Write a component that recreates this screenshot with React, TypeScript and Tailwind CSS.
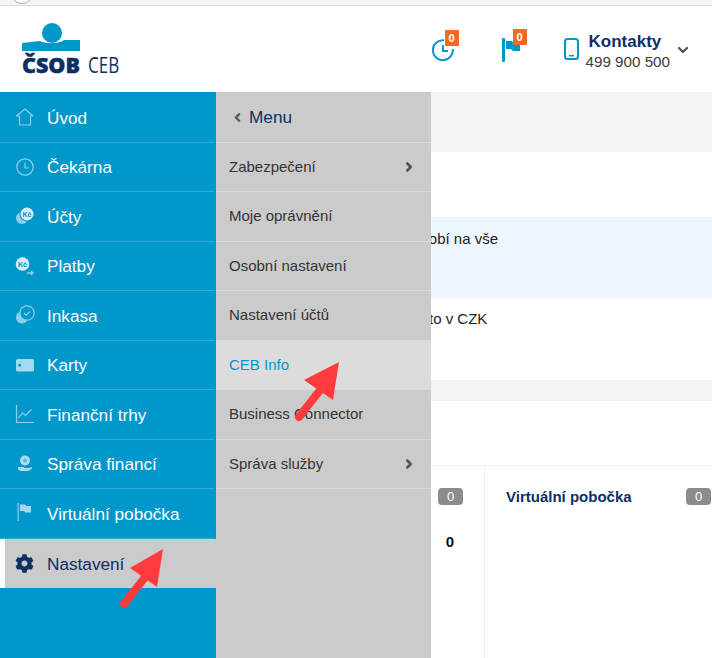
import { ChevronDown, ChevronLeft, ChevronRight } from "lucide-react";
import { FaCog } from "react-icons/fa";
import type { ReactNode } from "react";

// sidebar glyphs, drawn on a 20x20 box in the pale icon blue
const pale = "#8fd0e9";
const blue = "#0097cb";

function HomeIcon() {
  return (
    <svg width="20" height="20" viewBox="0 0 20 20" fill="none" stroke={pale} strokeWidth="1.2">
      <path d="M1.5 9 10 2l8 7h-2.5v9h-11V9z" strokeLinejoin="round" />
    </svg>
  );
}

function ClockIcon() {
  return (
    <svg width="20" height="20" viewBox="0 0 20 20" fill="none" stroke={pale} strokeWidth="1.2">
      <circle cx="10" cy="10" r="8.2" />
      <path d="M10 5.5V11h4" />
    </svg>
  );
}

function CoinsIcon() {
  return (
    <svg width="20" height="20" viewBox="0 0 20 20">
      <circle cx="7" cy="12" r="6" fill={pale} />
      <circle cx="12" cy="8" r="7.6" fill={blue} />
      <circle cx="12" cy="8" r="6.5" fill="#d4edf7" />
      <text x="12" y="10.5" fontSize="7" fontWeight="700" textAnchor="middle" fill={blue} fontFamily="Liberation Sans, sans-serif">
        Kč
      </text>
    </svg>
  );
}

function PayIcon() {
  return (
    <svg width="20" height="20" viewBox="0 0 20 20">
      <circle cx="7.5" cy="8" r="6.8" fill="#d4edf7" />
      <text x="7.5" y="10.5" fontSize="7" fontWeight="700" textAnchor="middle" fill={blue} fontFamily="Liberation Sans, sans-serif">
        Kč
      </text>
      <path d="M12 17h6m-2-2 2 2-2 2" stroke={pale} strokeWidth="1.3" fill="none" />
    </svg>
  );
}

function CollectIcon() {
  return (
    <svg width="20" height="20" viewBox="0 0 20 20" fill="none">
      <circle cx="7" cy="12.5" r="6" fill={pale} />
      <circle cx="12" cy="8" r="7.2" fill={blue} stroke={pale} strokeWidth="1.2" />
      <path d="m9 8 2.2 2.2L15 6.5" stroke={pale} strokeWidth="1.2" />
    </svg>
  );
}

function CardIcon() {
  return (
    <svg width="20" height="20" viewBox="0 0 20 20">
      <rect x="1" y="4" width="18" height="12.5" rx="1.5" fill="#a3d9ee" />
      <rect x="3.5" y="9" width="2.5" height="2.5" fill={blue} />
    </svg>
  );
}

function ChartIcon() {
  return (
    <svg width="20" height="20" viewBox="0 0 20 20" fill="none" stroke={pale} strokeWidth="1.2">
      <path d="M1.5 1v17.5h17.5" />
      <path d="m3.5 14 4-5 3 2.5 6-6" />
    </svg>
  );
}

function HandIcon() {
  return (
    <svg width="20" height="20" viewBox="0 0 20 20">
      <circle cx="10" cy="6.5" r="5" fill="#a9dcef" />
      <circle cx="10" cy="6.5" r="2" fill="#5db9dc" />
      <path d="M3 13h5l2 1h4l3-1v1.5l-3.5 2.5H6l-3-1.5z" fill="#a9dcef" />
    </svg>
  );
}

function FlagIcon() {
  return (
    <svg width="20" height="20" viewBox="0 0 20 20">
      <rect x="2.5" y="0" width="1.2" height="18" fill={pale} />
      <path d="M5 1.5h5l1.5 1.5H16v6.5h-5.5L9 8H5z" fill="#a3d9ee" />
    </svg>
  );
}

const MAIN_ITEMS: { label: string; icon: ReactNode }[] = [
  { label: "Úvod", icon: <HomeIcon /> },
  { label: "Čekárna", icon: <ClockIcon /> },
  { label: "Účty", icon: <CoinsIcon /> },
  { label: "Platby", icon: <PayIcon /> },
  { label: "Inkasa", icon: <CollectIcon /> },
  { label: "Karty", icon: <CardIcon /> },
  { label: "Finanční trhy", icon: <ChartIcon /> },
  { label: "Správa financí", icon: <HandIcon /> },
  { label: "Virtuální pobočka", icon: <FlagIcon /> },
];

const SUB_ITEMS = [
  { label: "Zabezpečení", more: true },
  { label: "Moje oprávnění" },
  { label: "Osobní nastavení" },
  { label: "Nastavení účtů" },
  { label: "CEB Info", active: true },
  { label: "Business Connector" },
  { label: "Správa služby", more: true },
];

function Logo() {
  return (
    <div className="flex w-[98px] flex-col">
      <svg width="58" height="32" viewBox="0 0 58 32" className="block">
        <circle cx="30" cy="10" r="10" fill={blue} />
        <path d="M0 20 18 18c5 3 19 3 24-1h16v11H0z" fill={blue} />
      </svg>
      <div className="mt-[1px] flex items-baseline gap-[8px] font-['Open_Sans','Liberation_Sans',sans-serif] leading-[17px] text-[#0c2f66]">
        <span className="text-[21.5px] font-extrabold [-webkit-text-stroke:0.5px_#0c2f66]">ČSOB</span>
        <span className="inline-block origin-bottom scale-y-125 text-[17px]">CEB</span>
      </div>
    </div>
  );
}

function Badge() {
  return (
    <span className="absolute -top-[9px] -right-[5px] flex h-[16px] w-[14px] items-center justify-center rounded-[1px] bg-[#f26a21] text-[11px] font-bold text-white">
      0
    </span>
  );
}

function Header() {
  return (
    <header className="flex h-[86px] items-center justify-between bg-white pl-[22px] pr-[21px]">
      <Logo />
      <div className="flex items-center">
        <div className="relative mr-[48px] mt-[2px]">
          <svg width="22" height="22" viewBox="0 0 22 22" fill="none" stroke={blue} strokeWidth="2" className="block">
            <path d="M12 1.2A10 10 0 1 0 20.8 10" />
            <path d="M11 6v6h5" />
          </svg>
          <Badge />
        </div>
        <div className="relative mr-[42px] mt-[2px]">
          <svg width="20" height="24" viewBox="0 0 20 24" className="block">
            <rect x="0" y="0" width="3" height="24" rx="1" fill={blue} />
            <path d="M4 3h6l2 3h6v7h-7l-2-2H4z" fill={blue} />
          </svg>
          <Badge />
        </div>
        <svg width="15" height="22" viewBox="0 0 15 22" fill="none" className="mr-[7px] block">
          <rect x="1" y="1" width="13" height="20" rx="2.5" stroke={blue} strokeWidth="2" />
          <rect x="5" y="17" width="5" height="1.5" fill={blue} />
        </svg>
        <div className="mt-[6px] font-['Liberation_Sans',sans-serif]">
          <div className="pl-[3px] text-[17px] leading-[20px] font-bold text-[#0c2f66]">Kontakty</div>
          <div className="text-[15.2px] leading-[20px] text-[#3c3c3c]">499 900 500</div>
        </div>
        <ChevronDown size={16} strokeWidth={3.5} className="ml-[5px] mt-[2px] text-[#555]" />
      </div>
    </header>
  );
}

function Sidebar() {
  return (
    <nav className="relative z-10 w-[215px] shrink-0 bg-[#0097cb] pt-[1px] text-[17.2px]">
      {MAIN_ITEMS.map((item) => (
        <div key={item.label} className="flex h-[49.5px] items-center gap-[12px] border-b border-white/20 pl-[15px] text-white">
          {item.icon}
          <span className="pt-[3px]">{item.label}</span>
        </div>
      ))}
      <div className="flex h-[49.5px] w-[216px] items-center gap-[13px] border-l-[5px] border-white bg-[#cbcbcb] pl-[10px] text-[#0c2f66]">
        <FaCog size={19} />
        <span className="pt-[3px]">Nastavení</span>
      </div>
    </nav>
  );
}

function Flyout() {
  return (
    <div className="absolute inset-y-0 left-0 w-[216px] border-l border-[#0097cb] bg-[#cbcbcb] pt-[1px] text-[15px] text-[#333]">
      <div className="flex h-[49.5px] items-center gap-[5px] border-b border-white/30 pl-[15px] text-[17.2px] text-[#0c2f66]">
        <ChevronLeft size={13} strokeWidth={4.5} className="text-[#555]" />
        <span className="pt-[2px]">Menu</span>
      </div>
      {SUB_ITEMS.map((item) =>
        item.active ? (
          <div key={item.label} className="flex h-[49.5px] items-center bg-[#dcdcdc] pl-[13px] text-[#0097cb]">
            {item.label}
          </div>
        ) : (
          <div key={item.label} className="flex h-[49.5px] items-center justify-between border-b border-white/30 pl-[13px] pr-[15px]">
            {item.label}
            {item.more && <ChevronRight size={14} strokeWidth={4.5} className="text-[#555]" />}
          </div>
        ),
      )}
    </div>
  );
}

function Counter() {
  return (
    <span className="flex h-[17px] w-[25px] items-center justify-center rounded-[4px] bg-[#8c8c8c] text-[13px] text-white">
      0
    </span>
  );
}

function Content() {
  return (
    <main className="relative flex min-w-0 flex-1 flex-col text-[15px] text-[#222]">
      <div className="h-[60px] bg-[#f3f3f3]" />
      <div className="h-[65px] bg-white" />
      <div className="h-[81px] bg-[#edf6fd] pl-[198px] pt-[11px]">osobí na vše</div>
      <div className="h-[82px] bg-white pl-[214px] pt-[10px]">to v CZK</div>
      <div className="h-[21px] bg-[#f3f3f3]" />
      <div className="h-[65px] border-b border-[#f0f0f0] bg-white" />
      <div className="flex flex-1 bg-white">
        <div className="flex w-[270px] shrink-0 flex-col items-end border-r border-[#f0f0f0] pr-[21px] pt-[22px]">
          <Counter />
          <b className="mt-[26px] mr-[9px] text-[#111]">0</b>
        </div>
        <div className="flex flex-1 items-start justify-between pl-[21px] pr-[1px] pt-[22px]">
          <b className="text-[15px] leading-[17px] text-[#0c2f66]">Virtuální pobočka</b>
          <Counter />
        </div>
      </div>
      <Flyout />
    </main>
  );
}

export default function App() {
  return (
    <div className="relative flex h-[658px] w-[712px] flex-col overflow-hidden bg-white font-['Liberation_Sans',sans-serif]">
      <div className="h-[6px] shrink-0 overflow-hidden border-b border-[#dedede] bg-[#f6f6f6] pl-[10px]">
        <div className="-mt-[20px] h-[24px] w-[24px] rounded-full border border-[#aaa] bg-white" />
      </div>
      <Header />
      <div className="flex flex-1">
        <Sidebar />
        <Content />
      </div>

      {/* hand-drawn red arrows on top of the screenshot */}
      <svg width="50" height="66" viewBox="0 0 50 66" className="absolute left-[118px] top-[545px] z-20">
        <path d="M45 4 12 23l27 19z" fill="#ff3b3f" />
        <path d="M28 31 6 59" stroke="#ff3b3f" strokeWidth="8" strokeLinecap="round" />
      </svg>
      <svg width="50" height="66" viewBox="0 0 50 66" className="absolute left-[293px] top-[358px] z-20">
        <path d="M46 4 11 22l29 20z" fill="#ff3b3f" />
        <path d="M28 31 6 59" stroke="#ff3b3f" strokeWidth="8" strokeLinecap="round" />
      </svg>
    </div>
  );
}
